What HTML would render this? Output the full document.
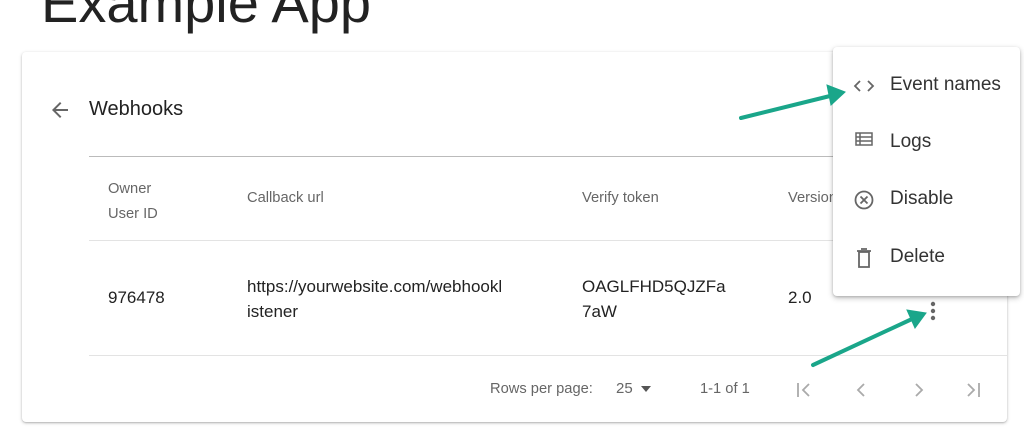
<!DOCTYPE html>
<html><head><style>
body{margin:0;width:1024px;height:427px;background:#fff;font-family:"Liberation Sans",sans-serif;position:relative;overflow:hidden;color:#212121}
.a{position:absolute;white-space:nowrap}
.h{font-size:14.7px;color:#666}
.t{font-size:17px;color:#222}
.m{font-size:19px;color:#333}
</style></head><body>
<div class="a" style="left:41px;top:-30px;font-size:56px;color:#222">Example App</div>
<div class="a" style="left:22px;top:52px;width:985px;height:370px;border-radius:4px;box-shadow:0 1px 3px rgba(0,0,0,.25),0 1px 1px rgba(0,0,0,.1)"></div>
<svg class="a" style="left:48px;top:98px" width="24" height="24" viewBox="0 0 24 24"><path d="M20 11H7.8l5.6-5.6L12 4l-8 8 8 8 1.4-1.4L7.8 13H20z" fill="#666"/></svg>
<div class="a" style="left:89px;top:98px;font-size:20px;color:#222">Webhooks</div>
<div class="a" style="left:89px;top:156px;width:918px;height:1px;background:#bbb"></div>
<div class="a h" style="left:108px;top:177px;line-height:25px">Owner<br>User ID</div>
<div class="a h" style="left:247px;top:190px">Callback url</div>
<div class="a h" style="left:582px;top:190px">Verify token</div>
<div class="a h" style="left:788px;top:190px">Version</div>
<div class="a" style="left:89px;top:240px;width:918px;height:1px;background:#e3e3e3"></div>
<div class="a t" style="left:108px;top:288px">976478</div>
<div class="a t" style="left:247px;top:274px;line-height:25px">https://yourwebsite.com/webhookl<br>istener</div>
<div class="a t" style="left:582px;top:274px;line-height:25px">OAGLFHD5QJZFa<br>7aW</div>
<div class="a t" style="left:788px;top:288px">2.0</div>
<svg class="a" style="left:928px;top:300px" width="10" height="24"><circle cx="5" cy="4" r="2.2" fill="#666"/><circle cx="5" cy="11" r="2.2" fill="#666"/><circle cx="5" cy="18" r="2.2" fill="#666"/></svg>
<div class="a" style="left:89px;top:355px;width:918px;height:1px;background:#e3e3e3"></div>
<div class="a h" style="left:490px;top:381px">Rows per page:</div>
<div class="a h" style="left:616px;top:380px;font-size:15px">25</div>
<svg class="a" style="left:640px;top:385px" width="12" height="8"><path d="M1 1h10L6 7z" fill="#555"/></svg>
<div class="a h" style="left:700px;top:381px">1-1 of 1</div>
<svg class="a" style="left:792px;top:378px" width="200" height="24" fill="none" stroke="#aaa" stroke-width="1.8"><path d="M6 5v14M17 6l-6 6 6 6"/><path d="M72 6l-6 6 6 6"/><path d="M124 6l6 6-6 6"/><path d="M176 6l6 6-6 6M187 5v14"/></svg>
<div class="a" style="left:833px;top:47px;width:187px;height:249px;background:#fff;border-radius:4px;box-shadow:0 2px 6px rgba(0,0,0,.25),0 1px 2px rgba(0,0,0,.15)"></div>
<svg class="a" style="left:852px;top:76px" width="24" height="200" fill="none" stroke="#666" stroke-width="1.8"><path d="M8 5l-5 5 5 5M16 5l5 5-5 5"/><rect x="4" y="57" width="16" height="12" stroke-width="1.5"/><path d="M4 61h16M4 65h16M8 57v12" stroke-width="1.5"/><circle cx="12" cy="124" r="8.5"/><path d="M8.5 120.5l7 7M15.5 120.5l-7 7"/><path d="M7 176h10v15H7zM5 175h14M9 173h6"/></svg>
<div class="a m" style="left:890px;top:74px">Event names</div>
<div class="a m" style="left:890px;top:131px">Logs</div>
<div class="a m" style="left:890px;top:188px">Disable</div>
<div class="a m" style="left:890px;top:246px">Delete</div>
<svg class="a" style="left:0;top:0" width="1024" height="427"><g stroke="#1aa68a" stroke-width="4" stroke-linecap="round" fill="#1aa68a"><line x1="741" y1="118" x2="830" y2="96"/><path d="M845 92l-18-7 4 20z" stroke-width="1"/><line x1="813" y1="365" x2="912" y2="319"/><path d="M926 313l-19-3 8 18z" stroke-width="1"/></g></svg>
</body></html>
